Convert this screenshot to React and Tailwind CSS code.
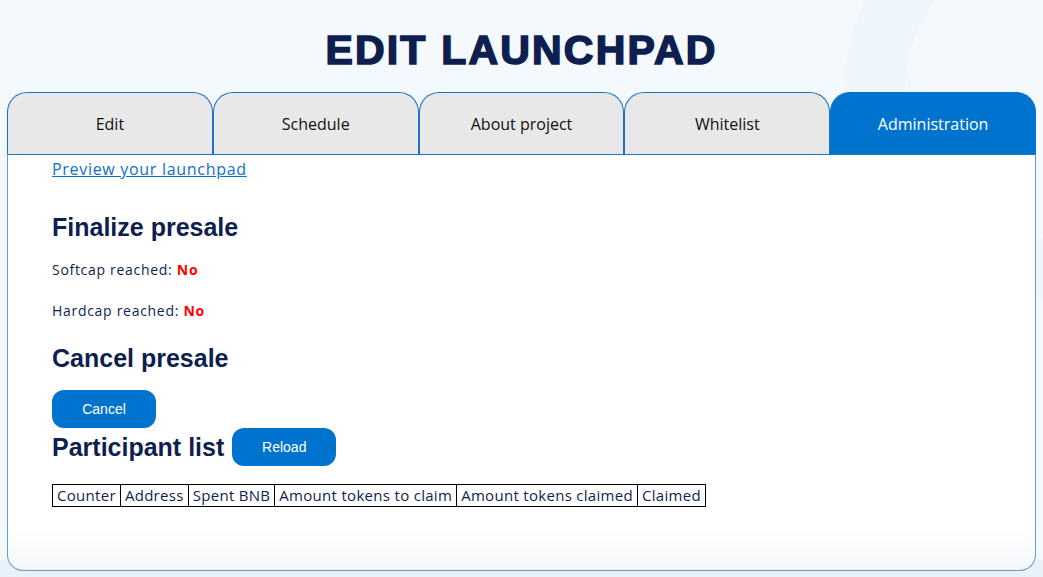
import React from "react";

const tabs = ["Edit", "Schedule", "About project", "Whitelist", "Administration"];
const cols = ["Counter", "Address", "Spent BNB", "Amount tokens to claim", "Amount tokens claimed", "Claimed"];
const arial = { fontFamily: '"Liberation Sans", Arial, sans-serif' };

export default function App() {
  return (
    <div className="relative w-[1043px] h-[577px] overflow-hidden bg-[#f4f9fd]" style={{ fontFamily: '"Open Sans", sans-serif' }}>
      {/* decorative background shapes */}
      <div className="absolute left-[845px] top-[-120px] w-[420px] h-[420px] rounded-full border-[60px] border-[#eef5fb]" />
      <div className="absolute left-[922px] top-[47px] w-[88px] h-[88px] rounded-full bg-[#f5f9fd]" />
      <div className="absolute left-0 top-[560px] w-[1043px] h-[17px] bg-[#eaf2f9]" />

      <div className="relative flex flex-col items-center pt-[28px]">
        <h1 className="text-[#0e1f4f] text-[41px] font-black leading-[44px] tracking-[2.2px] [-webkit-text-stroke:1.6px_#0e1f4f]" style={arial}>
          EDIT LAUNCHPAD
        </h1>
      </div>

      <div className="relative mx-[7px] mt-[20px] w-[1029px]">
        <div className="flex">
          {tabs.map((t, i) => (
            <div
              key={t}
              className={
                "flex-1 h-[62px] flex items-center justify-center rounded-t-[20px] border border-b-0 text-[16px] " +
                (i === 4 ? "bg-[#0073cf] border-[#0073cf] text-white" : "bg-[#e8e8e8] border-[#1a73c4] text-[#111]")
              }
            >
              {t}
            </div>
          ))}
        </div>
        <div className="h-[417px] border border-[#5f9ccc] border-t-[#1a73c4] rounded-b-[16px] bg-gradient-to-b from-white from-[90%] to-[#f3f6f9] pl-[44px] text-[#0e1f4f]">
          <a href="#" className="block text-[#0a70cc] underline text-[16px] tracking-[0.7px] leading-[22px] mt-[3px]">Preview your launchpad</a>
          <h2 className="mt-[32px] text-[25px] font-bold leading-[30px]" style={arial}>Finalize presale</h2>
          <p className="mt-[19px] text-[14px] tracking-[0.7px] leading-[18px]">Softcap reached: <span className="text-[#ff0000] font-bold">No</span></p>
          <p className="mt-[23px] text-[14px] tracking-[0.7px] leading-[18px]">Hardcap reached: <span className="text-[#ff0000] font-bold">No</span></p>
          <h2 className="mt-[23px] text-[25px] font-bold leading-[30px]" style={arial}>Cancel presale</h2>
          <button className="mt-[17px] w-[104px] h-[38px] rounded-[12px] bg-[#0073cf] text-white text-[14px] block" style={arial}>Cancel</button>
          <div className="flex items-center gap-[8px]">
            <h2 className="text-[25px] font-bold leading-[38px]" style={arial}>Participant list</h2>
            <button className="w-[104px] h-[38px] rounded-[12px] bg-[#0073cf] text-white text-[14px]" style={arial}>Reload</button>
          </div>
          <table className="mt-[18px] border-collapse border border-black text-[15px] tracking-[0.3px] leading-[21px]">
            <thead>
              <tr>
                {cols.map((c) => (
                  <th key={c} className="border border-black px-[4px] font-normal whitespace-nowrap">{c}</th>
                ))}
              </tr>
            </thead>
          </table>
        </div>
      </div>
    </div>
  );
}
